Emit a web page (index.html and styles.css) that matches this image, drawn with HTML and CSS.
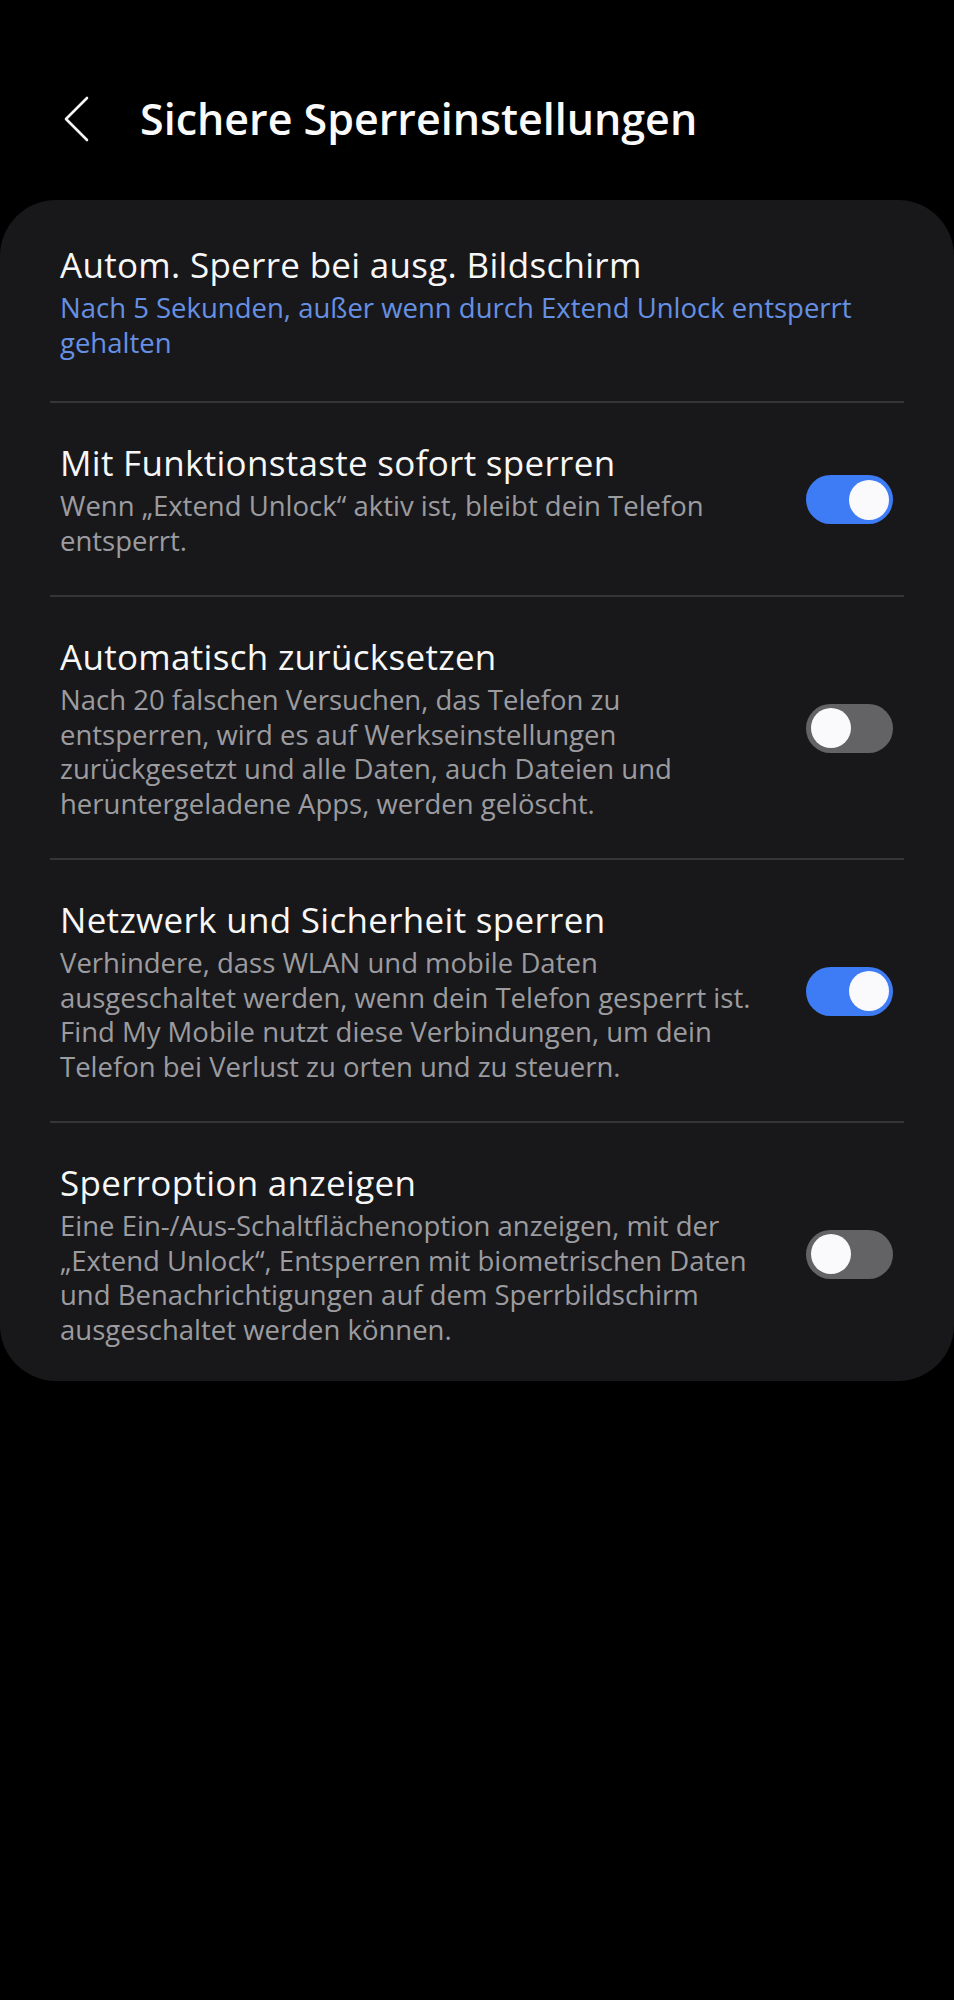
FILE: index.html
```html
<!DOCTYPE html>
<html lang="de">
<head>
<meta charset="utf-8">
<title>Sichere Sperreinstellungen</title>
<link rel="stylesheet" href="styles.css">
</head>
<body>
<header class="appbar">
  <svg class="back" width="26" height="46" viewBox="0 0 26 46" aria-hidden="true">
    <polyline points="23,2 2,23 23,44" fill="none" stroke="#f5f5f5" stroke-width="2.6" stroke-linecap="round" stroke-linejoin="round"/>
  </svg>
  <h1 class="title">Sichere Sperreinstellungen</h1>
</header>

<main class="card">
  <div class="row row-first">
    <div class="text">
      <div class="label">Autom. Sperre bei ausg. Bildschirm</div>
      <div class="desc desc-accent">Nach 5 Sekunden, außer wenn durch Extend Unlock entsperrt gehalten</div>
    </div>
  </div>

  <div class="row">
    <div class="text">
      <div class="label">Mit Funktionstaste sofort sperren</div>
      <div class="desc">Wenn „Extend Unlock“ aktiv ist, bleibt dein Telefon entsperrt.</div>
    </div>
    <div class="switch on"><span class="knob"></span></div>
  </div>

  <div class="row">
    <div class="text">
      <div class="label">Automatisch zurücksetzen</div>
      <div class="desc">Nach 20 falschen Versuchen, das Telefon zu entsperren, wird es auf Werkseinstellungen zurückgesetzt und alle Daten, auch Dateien und heruntergeladene Apps, werden gelöscht.</div>
    </div>
    <div class="switch"><span class="knob"></span></div>
  </div>

  <div class="row">
    <div class="text">
      <div class="label">Netzwerk und Sicherheit sperren</div>
      <div class="desc">Verhindere, dass WLAN und mobile Daten ausgeschaltet werden, wenn dein Telefon gesperrt ist. Find My Mobile nutzt diese Verbindungen, um dein Telefon bei Verlust zu orten und zu steuern.</div>
    </div>
    <div class="switch on"><span class="knob"></span></div>
  </div>

  <div class="row row-last">
    <div class="text">
      <div class="label">Sperroption anzeigen</div>
      <div class="desc">Eine Ein-/Aus-Schaltflächenoption anzeigen, mit der „Extend Unlock“, Entsperren mit biometrischen Daten und Benachrichtigungen auf dem Sperrbildschirm ausgeschaltet werden können.</div>
    </div>
    <div class="switch"><span class="knob"></span></div>
  </div>
</main>
</body>
</html>
```

FILE: styles.css
```css
* {
  box-sizing: border-box;
}

html,
body {
  margin: 0;
  padding: 0;
  background: #000;
}

body {
  width: 954px;
  min-height: 2000px;
  font-family: "Open Sans", "Noto Sans", sans-serif;
  color: #f7f7f7;
}

.appbar {
  display: flex;
  align-items: center;
  height: 149px;
  padding: 89px 0 0 64px;
  margin-bottom: 51px;
}

.back {
  flex: none;
  display: block;
}

.title {
  margin: 0 0 0 50px;
  font-size: 43px;
  font-weight: 600;
  line-height: 60px;
  letter-spacing: 0;
  color: #fafafa;
}

.card {
  display: block;
  background: #18181a;
  border-radius: 56px;
  padding: 0 50px;
}

.row {
  display: flex;
  align-items: center;
  padding: 38px 11px 37px 10px;
  border-top: 2px solid #353537;
}

.row-first {
  border-top: 0;
  padding-top: 43px;
  padding-bottom: 41px;
}

.row-last {
  padding-bottom: 34px;
}

.text {
  flex: 1;
  min-width: 0;
}

.label {
  font-size: 35px;
  line-height: 44px;
  letter-spacing: 0.3px;
  color: #f7f7f7;
}

.desc {
  margin-top: 4px;
  font-size: 27.5px;
  line-height: 34.5px;
  color: #9c9ca0;
}

.row-first .desc {
  margin-top: 4px;
}

.desc-accent {
  color: #6690e3;
}

.switch {
  flex: none;
  display: flex;
  align-items: center;
  justify-content: flex-start;
  width: 87px;
  height: 49px;
  margin-left: 40px;
  padding: 0 5px;
  border-radius: 25px;
  background: #636366;
}

.switch.on {
  justify-content: flex-end;
  padding: 0 4px;
  background: #3e7cf5;
}

.knob {
  display: block;
  width: 40px;
  height: 40px;
  border-radius: 50%;
  background: #fafafc;
}
```
